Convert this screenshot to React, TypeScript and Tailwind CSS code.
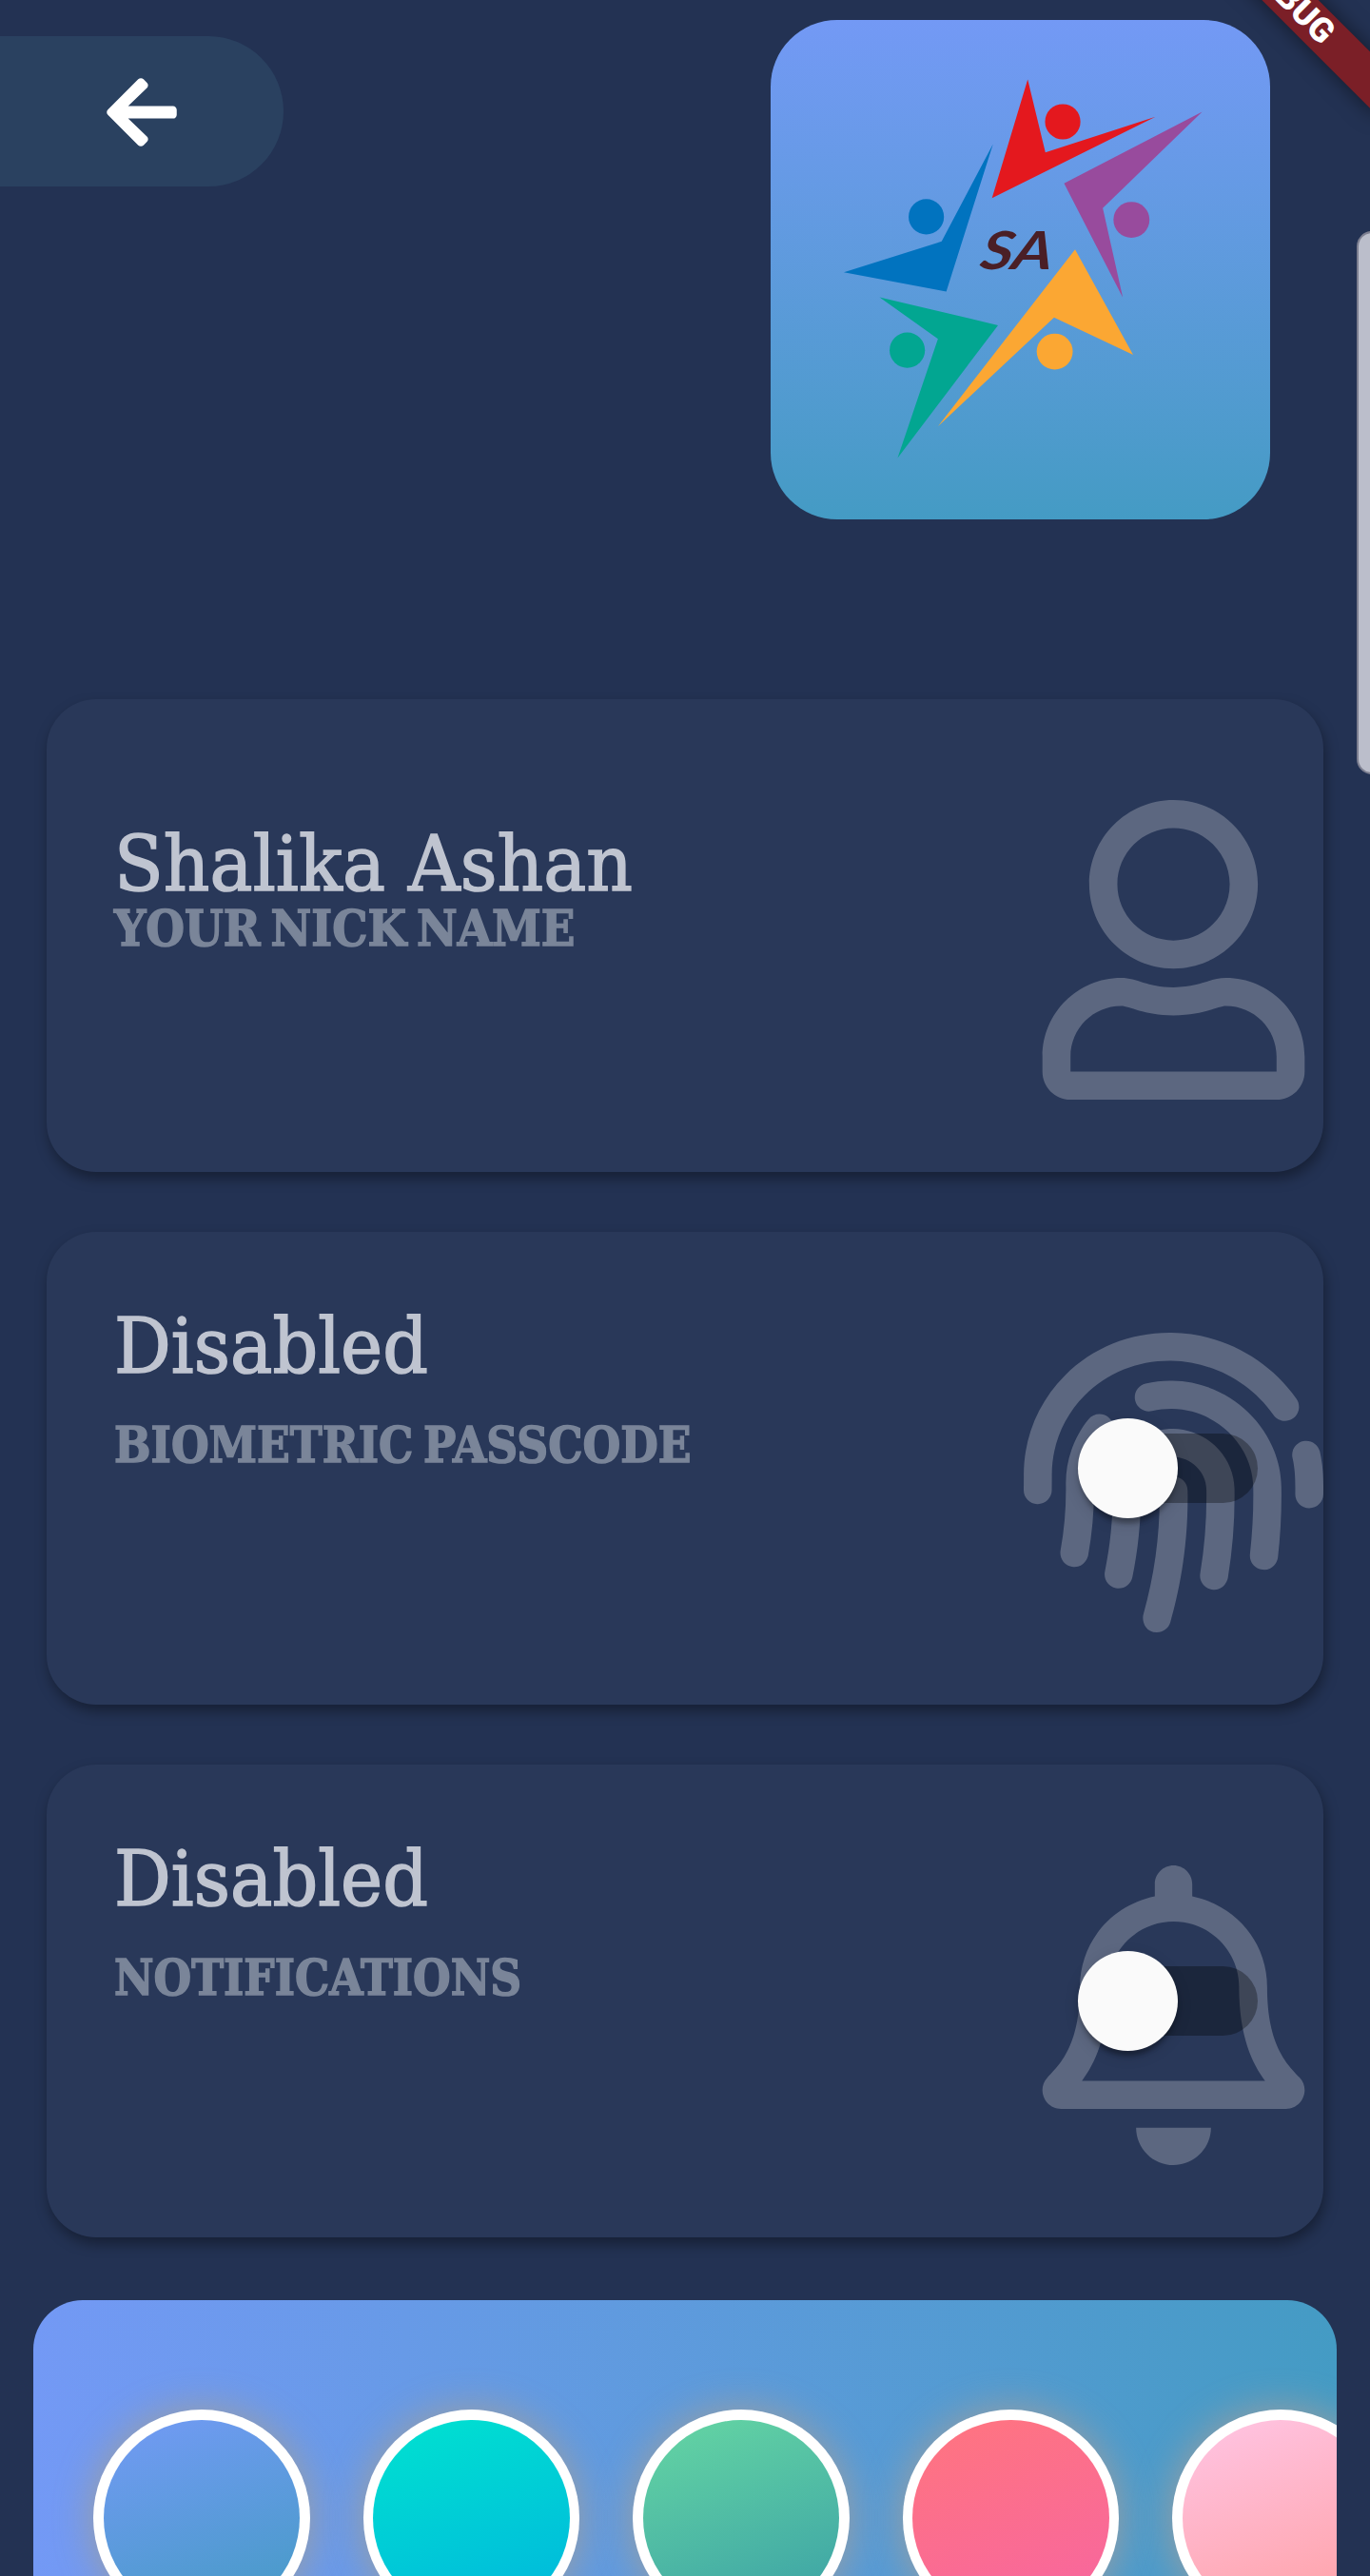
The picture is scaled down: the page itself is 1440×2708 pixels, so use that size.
import type { ReactNode } from "react";
import { FaArrowLeft, FaFingerprint, FaRegBell, FaRegUser } from "react-icons/fa";

const Logo = () => (
  <svg viewBox="29 30 1496 1497" className="size-full">
    <g fill="#e4181e">
      <path d="M799 208 L852 427 L1182 320 L692 564 Z" />
      <circle cx="904" cy="335" r="53" />
    </g>
    <g fill="#984b9d">
      <path d="M1322 305 L1024 594 L1084 862 L908 520 Z" />
      <circle cx="1110" cy="629" r="54" />
    </g>
    <g fill="#0173bf">
      <path d="M695 402 L555 844 L248 786 L541 694 Z" />
      <circle cx="495" cy="620" r="53" />
    </g>
    <g fill="#fba733">
      <path d="M941 718 L1115 1034 L878 922 L530 1248 Z" />
      <circle cx="880" cy="1024" r="54" />
    </g>
    <g fill="#02a691">
      <path d="M355 861 L710 945 L409 1343 L530 986 Z" />
      <circle cx="438" cy="1020" r="53" />
    </g>
    <text
      transform="translate(652 776) skewX(-10)"
      fill="#4a1f26"
      fontFamily="Lato, sans-serif"
      fontStyle="italic"
      fontWeight="700"
      fontSize="158"
      textLength="216"
      lengthAdjust="spacingAndGlyphs"
    >
      SA
    </text>
  </svg>
);

const Toggle = () => (
  <div className="absolute right-[69px] top-[196px] flex h-[105px] w-[189px] items-center">
    <div className="ml-4 h-[73px] flex-1 rounded-full bg-black/32" />
    <div className="absolute left-0 top-0 size-[105px] rounded-full bg-[#fafafa] shadow-[0_10px_5px_-5px_rgba(0,0,0,0.2),0_5px_5px_rgba(0,0,0,0.14),0_5px_16px_rgba(0,0,0,0.14)]" />
  </div>
);

type CardProps = {
  title: string;
  label: string;
  titleClass: string;
  labelClass: string;
  textClass: string;
  icon: ReactNode;
  toggle?: boolean;
};

const Card = ({ title, label, titleClass, labelClass, textClass, icon, toggle }: CardProps) => (
  <section className="relative flex h-[497px] justify-between rounded-[52px] bg-[#293859] pl-[71px] shadow-[2px_7px_14px_rgba(0,0,0,0.36)]">
    <div className={`flex flex-col items-start whitespace-nowrap font-['DejaVu_Serif',serif] ${textClass}`}>
      <h2
        className={`origin-left text-[81px] leading-[80px] text-[#bfc4d0] [-webkit-text-stroke:1.6px_#bfc4d0] ${titleClass}`}
      >
        {title}
      </h2>
      <p
        className={`origin-left text-[52px] font-bold leading-[58px] text-[#7a8599] [word-spacing:-6px] [-webkit-text-stroke:1.6px_#7a8599] ${labelClass}`}
      >
        {label}
      </p>
    </div>
    <div className="mr-[0.5px] pt-[105.5px] text-[315px] text-white/24">{icon}</div>
    {toggle && <Toggle />}
  </section>
);

const swatches = [
  "bg-[linear-gradient(160deg,#739af5,#449bc4)]",
  "bg-[linear-gradient(160deg,#00e2d0,#00b6dd)]",
  "bg-[linear-gradient(160deg,#65d6a3,#3aa0a6)]",
  "bg-[linear-gradient(160deg,#ff757f,#f765a0)]",
  "bg-[linear-gradient(160deg,#ffc5e4,#ff9fa3)]",
];

export default function App() {
  return (
    <main className="relative h-[2708px] w-[1440px] overflow-hidden bg-[#233253]">
      <header className="flex h-[735px] items-start justify-between pr-[105px] pt-[21px]">
        <button
          aria-label="Back"
          className="mt-[17px] flex h-[158px] w-[298px] items-center justify-center rounded-r-full bg-[#2a4160] pt-px text-[84px] text-white"
        >
          <FaArrowLeft />
        </button>
        <div className="size-[525px] overflow-hidden rounded-[70px] bg-linear-to-b from-[#7399f5] to-[#449bc4]">
          <Logo />
        </div>
      </header>

      <div className="flex flex-col gap-[63px] px-[49px]">
        <Card
          title="Shalika Ashan"
          label="YOUR NICK NAME"
          textClass="pt-[133px]"
          titleClass="scale-x-[0.934]"
          labelClass="scale-x-[0.899] -mt-px"
          icon={<FaRegUser />}
        />
        <Card
          title="Disabled"
          label="BIOMETRIC PASSCODE"
          textClass="pt-[80px] gap-[35px]"
          titleClass="scale-x-[0.921]"
          labelClass="scale-x-[0.877]"
          icon={<FaFingerprint />}
          toggle
        />
        <Card
          title="Disabled"
          label="NOTIFICATIONS"
          textClass="pt-[80px] gap-[35px]"
          titleClass="scale-x-[0.921]"
          labelClass="scale-x-[0.875]"
          icon={<FaRegBell />}
          toggle
        />
      </div>

      <div className="mx-[35px] mt-[66px] flex h-[455px] gap-[56px] overflow-hidden rounded-[52px] bg-linear-to-r from-[#7399f5] to-[#449bc4] pl-[63px] pt-[115px]">
        {swatches.map((fill) => (
          <div key={fill} className="size-[227.5px] shrink-0 rounded-full bg-white p-[10.5px] shadow-[0_0_41px_#9e9e9e]">
            <div className={`size-full rounded-full ${fill}`} />
          </div>
        ))}
      </div>

      <div className="absolute left-[1426px] top-[243px] h-[571px] w-8 rounded-[16px] border-2 border-[#7d7f90] bg-[#bbbecb]" />

      <div className="absolute left-[1206px] top-[-21px] flex h-[42px] w-[300px] rotate-45 items-center justify-center bg-[#7b1f27] font-[Roboto,sans-serif] text-[35.7px] font-black leading-none text-white shadow-[0_0_21px_rgba(0,0,0,0.5)]">
        DEBUG
      </div>
    </main>
  );
}
